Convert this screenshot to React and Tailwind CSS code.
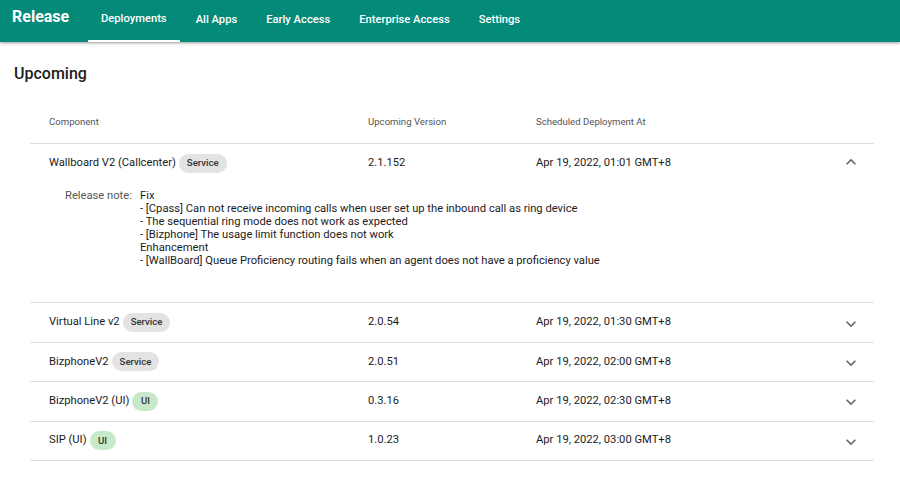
const tabs = ["Deployments", "All Apps", "Early Access", "Enterprise Access", "Settings"];

const notes = [
  "Fix",
  "- [Cpass] Can not receive incoming calls when user set up the inbound call as ring device",
  "- The sequential ring mode does not work as expected",
  "- [Bizphone] The usage limit function does not work",
  "Enhancement",
  "- [WallBoard] Queue Proficiency routing fails when an agent does not have a proficiency value",
];

const rows = [
  { name: "Wallboard V2 (Callcenter)", tag: "Service", version: "2.1.152", at: "Apr 19, 2022, 01:01 GMT+8", open: true },
  { name: "Virtual Line v2", tag: "Service", version: "2.0.54", at: "Apr 19, 2022, 01:30 GMT+8" },
  { name: "BizphoneV2", tag: "Service", version: "2.0.51", at: "Apr 19, 2022, 02:00 GMT+8" },
  { name: "BizphoneV2 (UI)", tag: "UI", version: "0.3.16", at: "Apr 19, 2022, 02:30 GMT+8" },
  { name: "SIP (UI)", tag: "UI", version: "1.0.23", at: "Apr 19, 2022, 03:00 GMT+8" },
];

function Chevron({ open }) {
  return (
    <svg width="20" height="20" viewBox="0 0 24 24" fill="#666" className={open ? "mb-[2px] rotate-180" : "mt-[2px]"}>
      <path d="M16.59 8.59 12 13.17 7.41 8.59 6 10l6 6 6-6z" />
    </svg>
  );
}

function Tag({ label }) {
  const color = label === "UI" ? "bg-[#c8e9c9] px-[8.5px]" : "bg-[#e3e3e3] px-[8px]";
  return (
    <span className={`ml-[3px] flex h-[19px] items-center rounded-full text-[9.6px] font-medium text-[#333] ${color}`}>
      {label}
    </span>
  );
}

function Row({ row }) {
  return (
    <div className="border-b border-[#dcdcdc]">
      <div className="grid h-[38.4px] grid-cols-[319px_168px_1fr_33px] items-center pl-[19px] text-[11.2px] text-[#1c1c1c]">
        <div className="flex items-center">
          <span>{row.name}</span>
          <Tag label={row.tag} />
        </div>
        <div>{row.version}</div>
        <div>{row.at}</div>
        <Chevron open={row.open} />
      </div>
      {row.open && (
        <div className="flex h-[120px] pl-[35px] pt-[7px] text-[11.2px] leading-[13px] text-[#1c1c1c]">
          <div className="w-[75px] text-[#555]">Release note:</div>
          <div>
            {notes.map((line) => (
              <div key={line}>{line}</div>
            ))}
          </div>
        </div>
      )}
    </div>
  );
}

export default function App() {
  return (
    <div className="h-[483px] overflow-hidden bg-white font-['Roboto',sans-serif]">
      <header className="flex h-[42px] items-stretch bg-[#038a78] text-white shadow-[0_1px_3px_rgba(0,0,0,0.4)]">
        <div className="w-[88px] pl-[12px] pt-[5px] text-[16px] font-bold">Release</div>
        <nav className="flex gap-[3px]">
          {tabs.map((tab, i) => (
            <div
              key={tab}
              className={`flex items-center px-[13px] pb-[2px] text-[11.2px] font-medium ${i === 0 ? "border-b-2 border-white" : ""}`}
            >
              {tab}
            </div>
          ))}
        </nav>
      </header>
      <main className="px-[14px] pt-[20px]">
        <h2 className="text-[16px] font-medium text-[#1c1c1c]">Upcoming</h2>
        <section className="ml-[16px] mr-[12px] mt-[16px]">
          <div className="grid h-[42px] grid-cols-[319px_168px_1fr_33px] items-center border-b border-[#dcdcdc] pl-[19px] text-[9.6px] text-[#555]">
            <div>Component</div>
            <div>Upcoming Version</div>
            <div>Scheduled Deployment At</div>
          </div>
          {rows.map((row) => (
            <Row key={row.name} row={row} />
          ))}
        </section>
      </main>
    </div>
  );
}
